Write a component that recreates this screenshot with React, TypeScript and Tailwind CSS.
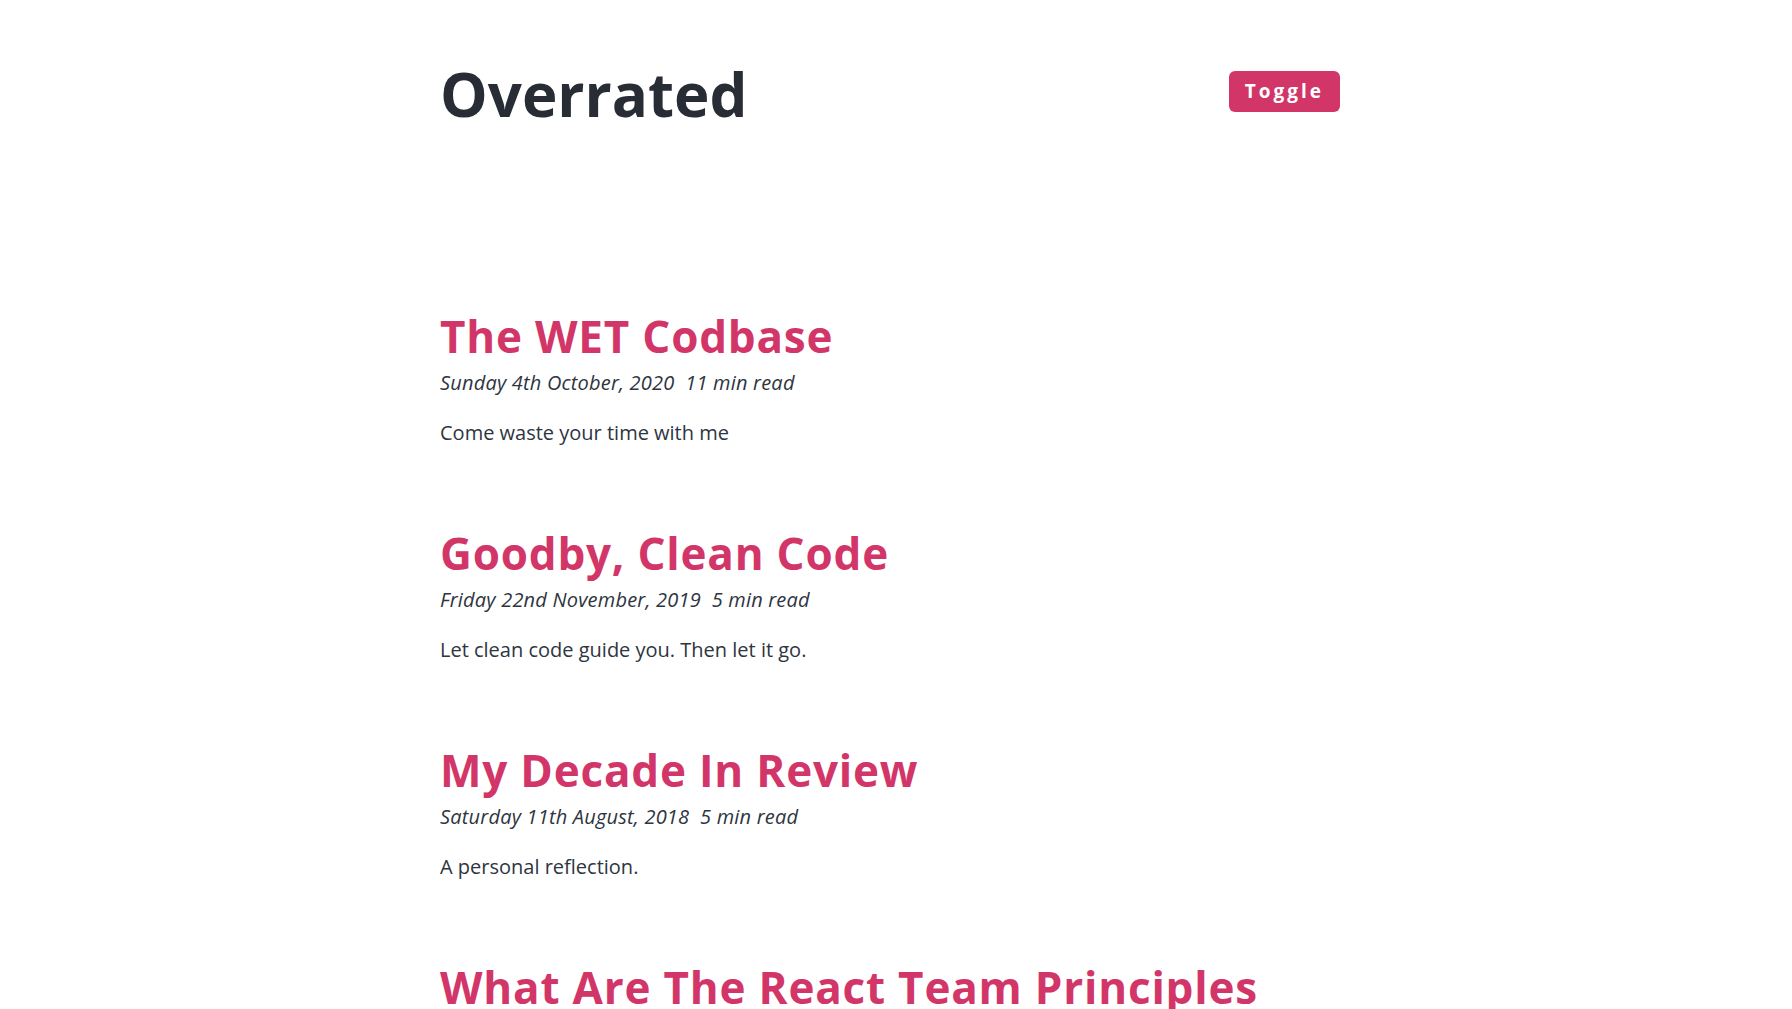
export default function App() {
  const posts = [
    { title: "The WET Codbase", date: "Sunday 4th October, 2020", read: "11 min read", desc: "Come waste your time with me" },
    { title: "Goodby, Clean Code", date: "Friday 22nd November, 2019", read: "5 min read", desc: "Let clean code guide you. Then let it go." },
    { title: "My Decade In Review", date: "Saturday 11th August, 2018", read: "5 min read", desc: "A personal reflection." },
    { title: "What Are The React Team Principles", date: "Thursday 5th December, 2019", read: "6 min read", desc: "Our guiding principles." },
  ];

  return (
    <div className="min-h-screen bg-white font-['Open_Sans',sans-serif] text-[#2e353f]">
      <div className="mx-auto w-[912px] pt-[64px]">
        <header className="flex items-start justify-between pr-[12px]">
          <h1 className="text-[60px] font-bold leading-none tracking-normal text-[#282c35]">Overrated</h1>
          <button className="mt-[7px] h-[41px] rounded-md bg-[#d23669] px-[16px] text-[19px] font-bold tracking-[3px] text-white">
            Toggle
          </button>
        </header>

        <main className="mt-[190px] flex flex-col gap-[84px]">
          {posts.map((p) => (
            <article key={p.title}>
              <h2 className="text-[44px] font-bold leading-none tracking-[0.8px] text-[#d23669]">{p.title}</h2>
              <p className="mt-[11px] text-[20px] italic leading-[28px] tracking-[0.2px]">
                {p.date}&nbsp;&nbsp;{p.read}
              </p>
              <p className="mt-[22px] text-[20px] leading-[28px]">{p.desc}</p>
            </article>
          ))}
        </main>
      </div>
    </div>
  );
}
